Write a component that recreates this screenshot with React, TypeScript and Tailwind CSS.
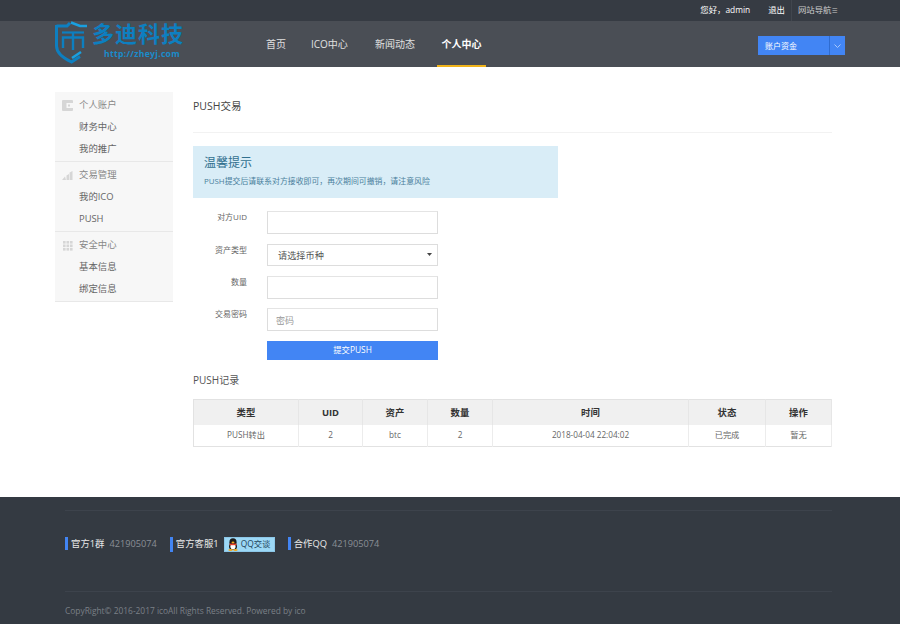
const font = { fontFamily: '"Open Sans", "Noto Sans CJK SC", sans-serif' };

const menu = [
  { title: "个人账户", icon: "wallet", items: ["财务中心", "我的推广"] },
  { title: "交易管理", icon: "chart", items: ["我的ICO", "PUSH"] },
  { title: "安全中心", icon: "grid", items: ["基本信息", "绑定信息"] },
];

const columns = [
  { label: "类型", value: "PUSH转出", width: "w-[105px]" },
  { label: "UID", value: "2", width: "w-[64px]" },
  { label: "资产", value: "btc", width: "w-[65px]" },
  { label: "数量", value: "2", width: "w-[65px]" },
  { label: "时间", value: "2018-04-04 22:04:02", width: "w-[196px]" },
  { label: "状态", value: "已完成", width: "w-[77px]" },
  { label: "操作", value: "暂无", width: "w-[66px]" },
];

function MenuIcon({ name }: { name: string }) {
  if (name === "wallet") {
    return (
      <svg width="11" height="11" viewBox="0 0 11 11">
        <rect width="11" height="11" rx="1" fill="#d6d6d6" />
        <rect x="4.5" y="3" width="6.5" height="5" fill="#f7f7f7" />
        <rect x="6" y="4.5" width="2" height="2" fill="#d6d6d6" />
      </svg>
    );
  }
  if (name === "chart") {
    return (
      <svg width="11" height="9" viewBox="0 0 11 9" fill="#d6d6d6">
        <path d="M0 9 3 5.5 4 9ZM4.5 9V4.5L7 3V9ZM7.6 9V1.5L10.5 0V9Z" />
      </svg>
    );
  }
  return (
    <svg width="10" height="10" viewBox="0 0 10 10" fill="#d6d6d6">
      {[0, 3.5, 7].map((y) =>
        [0, 3.5, 7].map((x) => <rect key={`${x}-${y}`} x={x} y={y} width="2.6" height="2.6" />),
      )}
    </svg>
  );
}

function ShieldLogo() {
  return (
    <svg width="34" height="43" viewBox="0 0 34 43" fill="none" className="shrink-0">
      <path d="M1.5 5H12L15 2M1.5 4V25C1.5 31 8 37 16.5 41L25 35.5" stroke="#0d7fc0" strokeWidth="3" />
      <path d="M16 1.5 25 5H32" stroke="#19a0e0" strokeWidth="2.5" />
      <path d="M17 37 26 31" stroke="#19a0e0" strokeWidth="2.5" />
      <path d="M7 11.5H29" stroke="#0d7fc0" strokeWidth="2.2" />
      <path d="M8 27V16.5H28V27M18 11.5V29" stroke="#0d7fc0" strokeWidth="2.4" />
    </svg>
  );
}

function QQPenguin() {
  return (
    <svg width="12" height="13" viewBox="0 0 12 13">
      <ellipse cx="6" cy="4.5" rx="3.6" ry="4.2" fill="#1c1c1c" />
      <ellipse cx="6" cy="8.5" rx="4" ry="3.5" fill="#1c1c1c" />
      <ellipse cx="6" cy="8.6" rx="2.6" ry="2.8" fill="#fff" />
      <rect x="2.6" y="5.6" width="6.8" height="1.6" fill="#e8412a" />
      <ellipse cx="3.5" cy="12" rx="2.2" ry="1" fill="#f2a81d" />
      <ellipse cx="8.5" cy="12" rx="2.2" ry="1" fill="#f2a81d" />
      <ellipse cx="6" cy="4.4" rx="1.5" ry="0.8" fill="#f2a81d" />
    </svg>
  );
}

function Field({ label, children }: { label: string; children: React.ReactNode }) {
  return (
    <div className="flex items-start">
      <label className="w-[54px] text-right text-[8px] leading-[12px] text-[#666]">{label}</label>
      <div className="ml-[20px] w-[171px]">{children}</div>
    </div>
  );
}

const inputClass =
  "block h-[23px] w-full border border-[#ddd] border-t-[#e4e4e4] bg-white px-[8px] pt-[1px] text-[9px] text-[#555] outline-none placeholder:text-[#999]";

export default function App() {
  return (
    <div className="flex min-h-[624px] w-[900px] flex-col overflow-hidden bg-white" style={font}>
      <div className="flex h-[21px] items-center justify-end bg-[#363b43] pr-[62px] text-[8.4px] text-white">
        <span>您好，admin</span>
        <span className="ml-[18px]">退出</span>
        <span className="ml-[6px] flex h-full items-center border-l border-[#41464e] pl-[6px] text-[#ccc]">
          网站导航<span className="text-[6.5px]">≡</span>
        </span>
      </div>

      <div className="flex h-[46px] items-start bg-[#4a4e55] pl-[55px]">
        <div className="flex w-[207px] shrink-0">
          <ShieldLogo />
          <div className="ml-[3px] flex flex-col">
            <span className="text-[22px] font-bold leading-[24px] tracking-[1px] text-[#0d7fc0]">多迪科技</span>
            <span className="ml-[12px] mt-[3px] text-[8.6px] font-bold leading-[12px] tracking-[0.3px] text-[#1a8ccb]">
              http://zheyj.com
            </span>
          </div>
        </div>
        <nav className="flex h-full text-[10px] text-[#e0e0e0]">
          <a className="flex w-[45px] items-center pl-[4px]">首页</a>
          <a className="flex w-[64px] items-center pl-[4px]">ICO中心</a>
          <a className="flex w-[66px] items-center pl-[4px]">新闻动态</a>
          <a className="flex w-[49px] items-center justify-center border-b-2 border-[#f0b31a] pt-[2px] font-bold text-white">
            个人中心
          </a>
        </nav>
        <div className="ml-auto mr-[55px] mt-[15px] flex h-[19px] w-[87px] bg-[#4285f4] text-[8px] text-white">
          <span className="flex flex-1 items-center pl-[7px]">账户资金</span>
          <span className="flex w-[16px] items-center justify-center border-l border-[#2f6cd0]">
            <svg width="7" height="4" viewBox="0 0 7 4" fill="none" stroke="#a9c8fb">
              <path d="M0.5 0.5 3.5 3.5 6.5 0.5" />
            </svg>
          </span>
        </div>
      </div>

      <div className="flex h-[430px] items-start pl-[55px]">
        <aside className="mt-[25px] w-[118px] shrink-0 bg-[#f7f7f7]">
          {menu.map((group) => (
            <div key={group.title} className="h-[70px] border-b border-[#e8e8e8] pt-[1px]">
              <div className="flex h-[23px] items-center pt-[2px] text-[9.4px] text-[#888]">
                <span className="flex w-[24px] justify-center pl-[1px]">
                  <MenuIcon name={group.icon} />
                </span>
                {group.title}
              </div>
              {group.items.map((item) => (
                <div key={item} className="flex h-[22px] items-center pl-[24px] text-[9.4px] text-[#666]">
                  {item}
                </div>
              ))}
            </div>
          ))}
        </aside>

        <main className="ml-[20px] w-[639px]">
          <h1 className="flex h-[66px] items-center border-b border-[#f2f2f2] pt-[15px] text-[10.5px] text-[#444]">
            PUSH交易
          </h1>
          <div className="mt-[13px] h-[52px] w-[365px] bg-[#d9edf7] pl-[11px] pt-[8px] text-[#31708f]">
            <div className="text-[12px] leading-[17px]">温馨提示</div>
            <div className="mt-[4px] text-[7.9px] leading-[12px] text-[#4a7f9c]">
              PUSH提交后请联系对方接收即可，再次期间可撤销，请注意风险
            </div>
          </div>

          <form className="mt-[13px] flex flex-col gap-[10px]">
            <Field label="对方UID">
              <input className={inputClass} />
            </Field>
            <Field label="资产类型">
              <div className="flex h-[22px] w-full items-center justify-between border border-[#ddd] bg-white pl-[10px] pr-[5px] text-[9.2px] text-[#555]">
                <span className="pt-[2px]">请选择币种</span>
                <svg width="5" height="3" viewBox="0 0 5 3" fill="#444" className="mb-[2px]">
                  <path d="M0 0H5L2.5 3Z" />
                </svg>
              </div>
            </Field>
            <Field label="数量">
              <input className={inputClass} />
            </Field>
            <div className="-mt-[1px]">
              <Field label="交易密码">
                <input className={inputClass} placeholder="密码" />
              </Field>
            </div>
            <div className="ml-[74px] w-[171px]">
              <button type="button" className="block h-[19px] w-full bg-[#4285f4] text-[8.4px] text-white">
                提交PUSH
              </button>
            </div>
          </form>

          <h2 className="mt-[12px] text-[10px] leading-[16px] text-[#555]">PUSH记录</h2>

          <table className="mt-[11px] w-[639px] table-fixed border-collapse border border-[#e2e2e2]">
            <thead>
              <tr className="h-[25px] bg-[#f0f0f0]">
                {columns.map((col) => (
                  <th
                    key={col.label}
                    className={`${col.width} border-r border-[#e6e6e6] pt-[1px] text-[9.4px] font-bold text-[#333]`}
                  >
                    {col.label}
                  </th>
                ))}
              </tr>
            </thead>
            <tbody>
              <tr className="h-[22px]">
                {columns.map((col) => (
                  <td key={col.label} className="border-r border-[#ececec] text-center text-[8.2px] text-[#666]">
                    {col.value}
                  </td>
                ))}
              </tr>
            </tbody>
          </table>
        </main>
      </div>

      <footer className="flex h-[127px] flex-col bg-[#343a42] pl-[65px] pr-[68px]">
        <div className="mt-[13px] flex h-[67px] items-center border-t border-[#3d434c] text-[9.4px]">
          <div className="flex items-center">
            <span className="mr-[3px] h-[13px] w-[3px] bg-[#4285f4]" />
            <span className="text-[#e8e8e8]">官方1群</span>
            <span className="ml-[5px] text-[9.2px] text-[#8a8f96]">421905074</span>
          </div>
          <div className="ml-[13px] flex items-center">
            <span className="mr-[3px] h-[15px] w-[3px] bg-[#4285f4]" />
            <span className="text-[#e8e8e8]">官方客服1</span>
            <span className="ml-[5px] flex h-[15px] w-[51px] items-center gap-[2px] border border-[#8cc7e8] bg-[#9cd8f6] pl-[2px] text-[8.4px] text-[#23445a]">
              <QQPenguin />
              QQ交谈
            </span>
          </div>
          <div className="ml-[13px] flex items-center">
            <span className="mr-[3px] h-[13px] w-[3px] bg-[#4285f4]" />
            <span className="text-[#e8e8e8]">合作QQ</span>
            <span className="ml-[5px] text-[9.2px] text-[#8a8f96]">421905074</span>
          </div>
        </div>
        <div className="mt-[14px] flex h-[33px] items-center border-t border-[#3d434c] pt-[6px] text-[8.4px] text-[#7b8087]">
          CopyRight© 2016-2017 icoAll Rights Reserved. Powered by ico
        </div>
      </footer>
    </div>
  );
}
